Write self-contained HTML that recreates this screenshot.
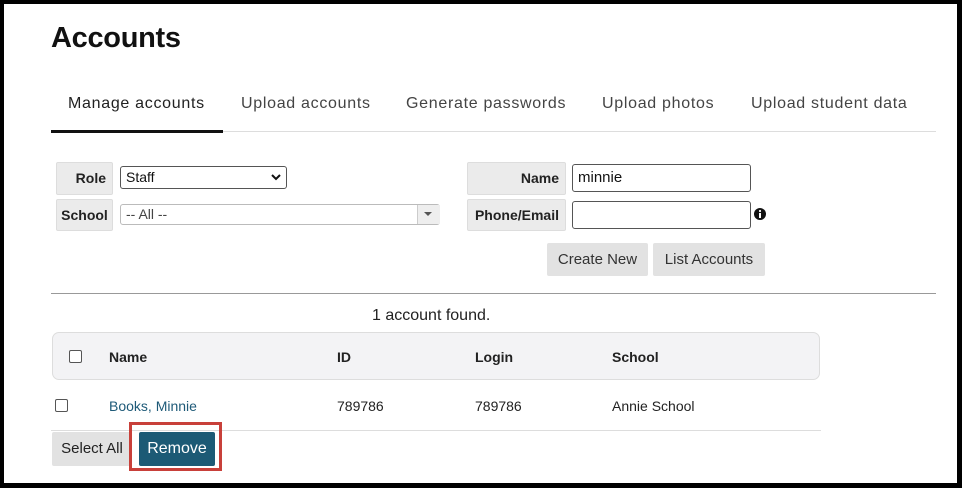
<!DOCTYPE html>
<html><head><style>
body{margin:0;width:962px;height:488px;background:#000;position:relative;overflow:hidden;font-family:"Liberation Sans",sans-serif;}
#w{position:absolute;left:4px;top:4px;width:953px;height:479px;background:#fff;}
.a{position:absolute;}
.lbl{position:absolute;background:#ebebeb;border:1px solid #ddd;border-radius:2px;font-weight:bold;font-size:14px;color:#222;text-align:right;box-sizing:border-box;padding-right:6px;}
.inp{position:absolute;border:1px solid #555;border-radius:3px;box-sizing:border-box;background:#fff;font-size:15px;color:#111;padding-left:5px;}
.btn{position:absolute;background:#e2e2e2;border-radius:2px;font-size:15px;color:#333;text-align:center;}
.tab{position:absolute;top:95px;font-size:16px;color:#444;letter-spacing:0.7px;}
.h{font-weight:bold;font-size:14px;color:#222;position:absolute;top:349px;}
.c{font-size:14px;color:#222;position:absolute;top:398px;}
.cb{position:absolute;width:11px;height:11px;border:1px solid #555;border-radius:2px;background:#fff;}
</style></head><body>
<div id="w"></div>
<div class="a" style="left:51px;top:22px;font-size:29px;font-weight:bold;color:#111;letter-spacing:-0.3px">Accounts</div>
<div class="tab" style="left:68px;color:#222">Manage accounts</div>
<div class="tab" style="left:241px">Upload accounts</div>
<div class="tab" style="left:406px">Generate passwords</div>
<div class="tab" style="left:602px">Upload photos</div>
<div class="tab" style="left:751px">Upload student data</div>
<div class="a" style="left:51px;top:131px;width:885px;height:1px;background:#ddd"></div>
<div class="a" style="left:51px;top:130px;width:172px;height:3px;background:#111"></div>

<div class="lbl" style="left:56px;top:162px;width:57px;height:33px;line-height:31px">Role</div>
<div class="inp" style="left:120px;top:166px;width:167px;height:23px;line-height:21px;font-size:14px">Staff</div>
<svg class="a" style="left:271px;top:173px" width="10" height="8"><path d="M1 2 L5 6 L9 2" stroke="#111" stroke-width="2" fill="none"/></svg>
<div class="lbl" style="left:56px;top:199px;width:57px;height:32px;line-height:30px;text-align:center;padding:0">School</div>
<div class="inp" style="left:120px;top:204px;width:320px;height:21px;line-height:19px;border-color:#bbb;font-size:14px;color:#444">-- All --</div>
<div class="a" style="left:417px;top:205px;width:22px;height:19px;background:#eee;border-left:1px solid #ccc"></div>
<svg class="a" style="left:423px;top:211px" width="10" height="6"><path d="M1 1 L9 1 L5 5Z" fill="#555"/></svg>

<div class="lbl" style="left:467px;top:162px;width:99px;height:33px;line-height:31px">Name</div>
<div class="inp" style="left:572px;top:164px;width:179px;height:28px;line-height:26px">minnie</div>
<div class="lbl" style="left:467px;top:199px;width:99px;height:32px;line-height:30px">Phone/Email</div>
<div class="inp" style="left:572px;top:201px;width:179px;height:28px"></div>
<svg class="a" style="left:754px;top:208px" width="12" height="12"><circle cx="6" cy="6" r="6" fill="#111"/><rect x="5" y="5" width="2" height="5" fill="#fff"/><circle cx="6" cy="3" r="1.1" fill="#fff"/></svg>
<div class="btn" style="left:547px;top:243px;width:101px;height:33px;line-height:33px">Create New</div>
<div class="btn" style="left:653px;top:243px;width:112px;height:33px;line-height:33px">List Accounts</div>

<div class="a" style="left:51px;top:293px;width:885px;height:1px;background:#999"></div>
<div class="a" style="left:372px;top:307px;font-size:16px;color:#222">1 account found.</div>
<div class="a" style="left:52px;top:332px;width:768px;height:48px;background:#f3f3f5;border:1px solid #ddd;border-radius:7px;box-sizing:border-box"></div>
<div class="cb" style="left:69px;top:350px"></div>
<div class="h" style="left:109px">Name</div>
<div class="h" style="left:337px">ID</div>
<div class="h" style="left:475px">Login</div>
<div class="h" style="left:612px">School</div>
<div class="cb" style="left:55px;top:399px"></div>
<div class="c" style="left:109px;color:#1e5a78">Books, Minnie</div>
<div class="c" style="left:337px">789786</div>
<div class="c" style="left:475px">789786</div>
<div class="c" style="left:612px">Annie School</div>
<div class="a" style="left:51px;top:430px;width:770px;height:1px;background:#ddd"></div>
<div class="btn" style="left:52px;top:432px;width:80px;height:34px;line-height:34px;color:#222">Select All</div>
<div class="a" style="left:129px;top:422px;width:93px;height:49px;border:3px solid #c8403a;box-sizing:border-box"></div>
<div class="a" style="left:139px;top:432px;width:76px;height:34px;line-height:34px;background:#1c5a75;color:#fff;font-size:16px;text-align:center;border-radius:2px">Remove</div>
</body></html>
